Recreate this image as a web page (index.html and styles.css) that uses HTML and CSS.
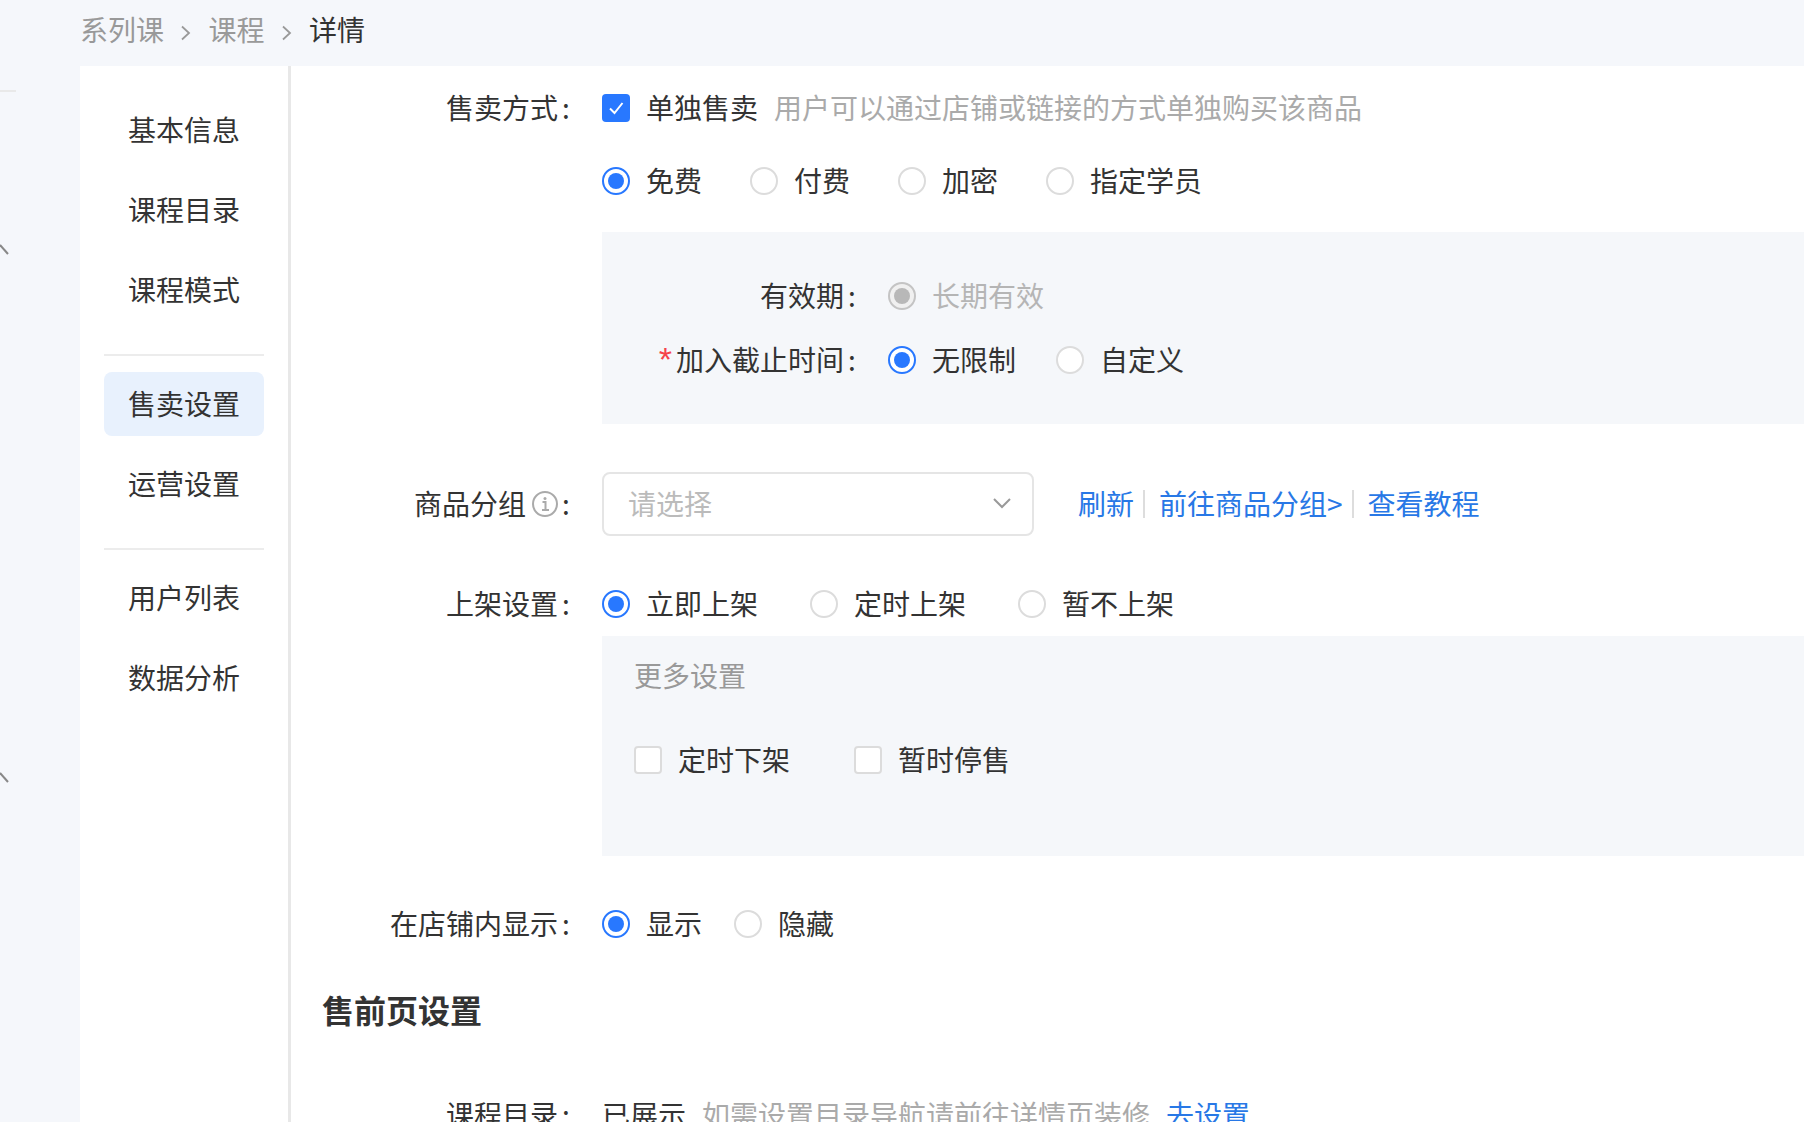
FILE: index.html
```html
<!DOCTYPE html>
<html lang="zh-CN">
<head>
    <meta charset="UTF-8">
    <meta name="viewport" content="width=device-width, initial-scale=1.0">
    <title>课程详情</title>
    <link rel="stylesheet" href="styles.css">
</head>
<body>
    <nav class="crumbs">
        <span>系列课</span>
        <svg class="crumb-arrow" viewBox="0 0 12 16"><path d="M2 1.5l7 6.5-7 6.5"/></svg>
        <span>课程</span>
        <svg class="crumb-arrow" viewBox="0 0 12 16"><path d="M2 1.5l7 6.5-7 6.5"/></svg>
        <span class="crumb-current">详情</span>
    </nav>

    <div class="page">
        <div class="rail">
            <div class="rail-line"></div>
            <svg class="rail-arrow rail-arrow-first" viewBox="0 0 10 12"><path d="M0 1l8 9"/></svg>
            <svg class="rail-arrow rail-arrow-second" viewBox="0 0 10 12"><path d="M0 1l8 9"/></svg>
        </div>

        <aside class="side">
            <a class="side-item">基本信息</a>
            <a class="side-item">课程目录</a>
            <a class="side-item">课程模式</a>
            <div class="side-line"></div>
            <a class="side-item active">售卖设置</a>
            <a class="side-item">运营设置</a>
            <div class="side-line"></div>
            <a class="side-item">用户列表</a>
            <a class="side-item">数据分析</a>
        </aside>

        <main class="main">
            <div class="row">
                <div class="label">售卖方式<span class="colon">:</span></div>
                <span class="check checked">
                    <svg viewBox="0 0 28 28"><path d="M8 14.5l4.5 4.5 8-10"/></svg>
                </span>
                <span class="opt-text">单独售卖</span>
                <span class="hint">用户可以通过店铺或链接的方式单独购买该商品</span>
            </div>
            <div class="row row-options">
                <span class="radio on"></span><span class="opt-text gap-48">免费</span>
                <span class="radio"></span><span class="opt-text gap-48">付费</span>
                <span class="radio"></span><span class="opt-text gap-48">加密</span>
                <span class="radio"></span><span class="opt-text">指定学员</span>
            </div>

            <section class="box box-period">
                <div class="row">
                    <div class="label label-box">有效期<span class="colon">:</span></div>
                    <span class="radio disabled"></span><span class="opt-text text-disabled">长期有效</span>
                </div>
                <div class="row row-deadline">
                    <div class="label label-box"><span class="star">*</span>加入截止时间<span class="colon">:</span></div>
                    <span class="radio on"></span><span class="opt-text gap-40">无限制</span>
                    <span class="radio"></span><span class="opt-text">自定义</span>
                </div>
            </section>

            <div class="row row-group">
                <div class="label">商品分组
                    <svg class="info" viewBox="0 0 26 26">
                        <circle cx="13" cy="13" r="12"/>
                        <path d="M10.5 11H13.5V19M10 19H17"/>
                        <circle class="info-dot" cx="13" cy="7.5" r="1.5"/>
                    </svg><span class="colon">:</span>
                </div>
                <div class="select">
                    <span>请选择</span>
                    <svg class="select-arrow" viewBox="0 0 20 12"><path d="M2 2l8 8 8-8"/></svg>
                </div>
                <a class="link link-first">刷新</a>
                <span class="link-line"></span>
                <a class="link">前往商品分组&gt;</a>
                <span class="link-line"></span>
                <a class="link">查看教程</a>
            </div>

            <div class="row row-shelf">
                <div class="label">上架设置<span class="colon">:</span></div>
                <span class="radio on"></span><span class="opt-text gap-52">立即上架</span>
                <span class="radio"></span><span class="opt-text gap-52">定时上架</span>
                <span class="radio"></span><span class="opt-text">暂不上架</span>
            </div>

            <section class="box box-more">
                <div class="more-title">更多设置</div>
                <div class="more-checks">
                    <span class="check"></span><span class="opt-text gap-64">定时下架</span>
                    <span class="check"></span><span class="opt-text">暂时停售</span>
                </div>
            </section>

            <div class="row row-store">
                <div class="label">在店铺内显示<span class="colon">:</span></div>
                <span class="radio on"></span><span class="opt-text gap-32">显示</span>
                <span class="radio"></span><span class="opt-text">隐藏</span>
            </div>

            <h2 class="title">售前页设置</h2>

            <div class="row row-catalog">
                <div class="label">课程目录<span class="colon">:</span></div>
                <span class="shown">已展示</span>
                <span class="hint">如需设置目录导航请前往详情页装修</span>
                <a class="link link-set">去设置</a>
            </div>
        </main>
    </div>
</body>
</html>
```

FILE: styles.css
```css
* {
    box-sizing: border-box;
}
html, body {
    height: 100%;
}
body {
    margin: 0;
    height: 1122px;
    overflow: hidden;
    display: flex;
    flex-direction: column;
    background: #f5f7fb;
    color: #333;
    font-family: "Noto Sans CJK SC", "Noto Sans", sans-serif;
    font-size: 28px;
    line-height: 40px;
}

/* breadcrumb */
.crumbs {
    height: 66px;
    flex-shrink: 0;
    display: flex;
    align-items: center;
    padding: 0 0 8px 80px;
    color: #999;
}
.crumb-arrow {
    width: 12px;
    height: 16px;
    margin: 8px 16.5px 0 16px;
    fill: none;
    stroke: #999;
    stroke-width: 1.8;
}
.crumb-current {
    color: #333;
}

/* page columns */
.page {
    flex: 1;
    display: flex;
    min-height: 0;
}
.rail {
    width: 80px;
    flex-shrink: 0;
}
.rail-line {
    width: 16px;
    height: 2px;
    margin-top: 24px;
    background: #e9e9e9;
}
.rail-arrow {
    display: block;
    width: 10px;
    height: 12px;
    fill: none;
    stroke: #888;
    stroke-width: 2;
}
.rail-arrow-first {
    margin-top: 152px;
}
.rail-arrow-second {
    margin-top: 516px;
}

.side {
    width: 211px;
    flex-shrink: 0;
    display: flex;
    flex-direction: column;
    gap: 16px;
    padding: 32px 24px 0;
    background: #fff;
    border-right: 3px solid #e8e8e8;
}
.side-item {
    height: 64px;
    flex-shrink: 0;
    border-radius: 8px;
    text-align: center;
    line-height: 62px;
}
.side-item.active {
    background: #e8f1fd;
}
.side-line {
    height: 2px;
    flex-shrink: 0;
    margin-top: 16px;
    background: #ececec;
}

.main {
    flex: 1;
    padding: 22px 0 0 31px;
    background: #fff;
    overflow: hidden;
}

/* form rows */
.row {
    display: flex;
    align-items: center;
    height: 40px;
}
.label {
    width: 252px;
    margin-right: 28px;
    padding-bottom: 2px;
    flex-shrink: 0;
    display: flex;
    justify-content: flex-end;
    align-items: center;
    white-space: nowrap;
}
.label-box {
    width: 258px;
}
.colon {
    width: 16px;
    text-align: center;
}
.star {
    color: #f5434a;
    font-family: "Liberation Sans", sans-serif;
    font-size: 34px;
    line-height: 30px;
    margin-right: 4px;
}
.row-options {
    margin-top: 33px;
    padding-left: 280px;
}
.row-deadline {
    margin-top: 24px;
}
.row-group {
    height: 64px;
    margin-top: 48px;
}
.row-shelf {
    margin-top: 48px;
}
.row-store {
    margin-top: 48px;
}
.row-catalog {
    margin-top: 66px;
}

.opt-text {
    margin-left: 16px;
    padding-bottom: 2px;
    white-space: nowrap;
}
.gap-32 { margin-right: 32px; }
.gap-40 { margin-right: 40px; }
.gap-48 { margin-right: 48px; }
.gap-52 { margin-right: 52px; }
.gap-64 { margin-right: 64px; }

.text-disabled {
    color: #b5b5b5;
}
.hint {
    margin-left: 16px;
    padding-bottom: 2px;
    color: #aaa;
    white-space: nowrap;
}
.shown {
    padding-bottom: 2px;
    white-space: nowrap;
}
.hint + .link-set {
    margin-left: 16px;
}

/* radio + checkbox */
.radio {
    width: 28px;
    height: 28px;
    flex-shrink: 0;
    border: 2px solid #dcdcdc;
    border-radius: 50%;
    background: #fff;
    display: flex;
    align-items: center;
    justify-content: center;
}
.radio.on {
    border-color: #2878ff;
}
.radio.on::after {
    content: "";
    width: 16px;
    height: 16px;
    border-radius: 50%;
    background: #2878ff;
}
.radio.disabled {
    border-color: #c4c4c4;
    background: #f0f0f0;
}
.radio.disabled::after {
    content: "";
    width: 16px;
    height: 16px;
    border-radius: 50%;
    background: #b8b8b8;
}
.check {
    width: 28px;
    height: 28px;
    flex-shrink: 0;
    border: 2px solid #dcdcdc;
    border-radius: 4px;
    background: #fff;
}
.check.checked {
    border: 0;
    background: #2878ff;
}
.check svg {
    display: block;
    width: 28px;
    height: 28px;
    fill: none;
    stroke: #fff;
    stroke-width: 2;
}

/* grey blocks */
.box {
    margin-left: 280px;
    background: #f5f7fa;
}
.box-period {
    height: 192px;
    margin-top: 31px;
    padding-top: 44px;
}
.box-more {
    height: 220px;
    margin-top: 12px;
    padding: 20px 32px 0;
}
.more-title {
    height: 40px;
    line-height: 38px;
    color: #999;
}
.more-checks {
    display: flex;
    align-items: center;
    height: 40px;
    margin-top: 44px;
}

/* select + links */
.info {
    width: 26px;
    height: 26px;
    margin: 2px 0 0 6px;
    fill: none;
    stroke: #aaa;
    stroke-width: 2;
}
.info-dot {
    fill: #aaa;
    stroke: none;
}
.select {
    width: 432px;
    height: 64px;
    flex-shrink: 0;
    display: flex;
    align-items: center;
    justify-content: space-between;
    padding: 0 20px 2px 24px;
    border: 2px solid #e5e5e5;
    border-radius: 8px;
    color: #bbb;
}
.select-arrow {
    width: 20px;
    height: 12px;
    fill: none;
    stroke: #999;
    stroke-width: 2;
}
.link {
    padding-bottom: 2px;
    color: #2878e6;
    white-space: nowrap;
}
.link-first {
    margin-left: 44px;
}
.link-line {
    width: 2px;
    height: 28px;
    margin: 0 14px 0 9px;
    background: #ddd;
}

.title {
    margin: 45px 0 0;
    font-size: 32px;
    line-height: 40px;
    font-weight: 700;
}
```
